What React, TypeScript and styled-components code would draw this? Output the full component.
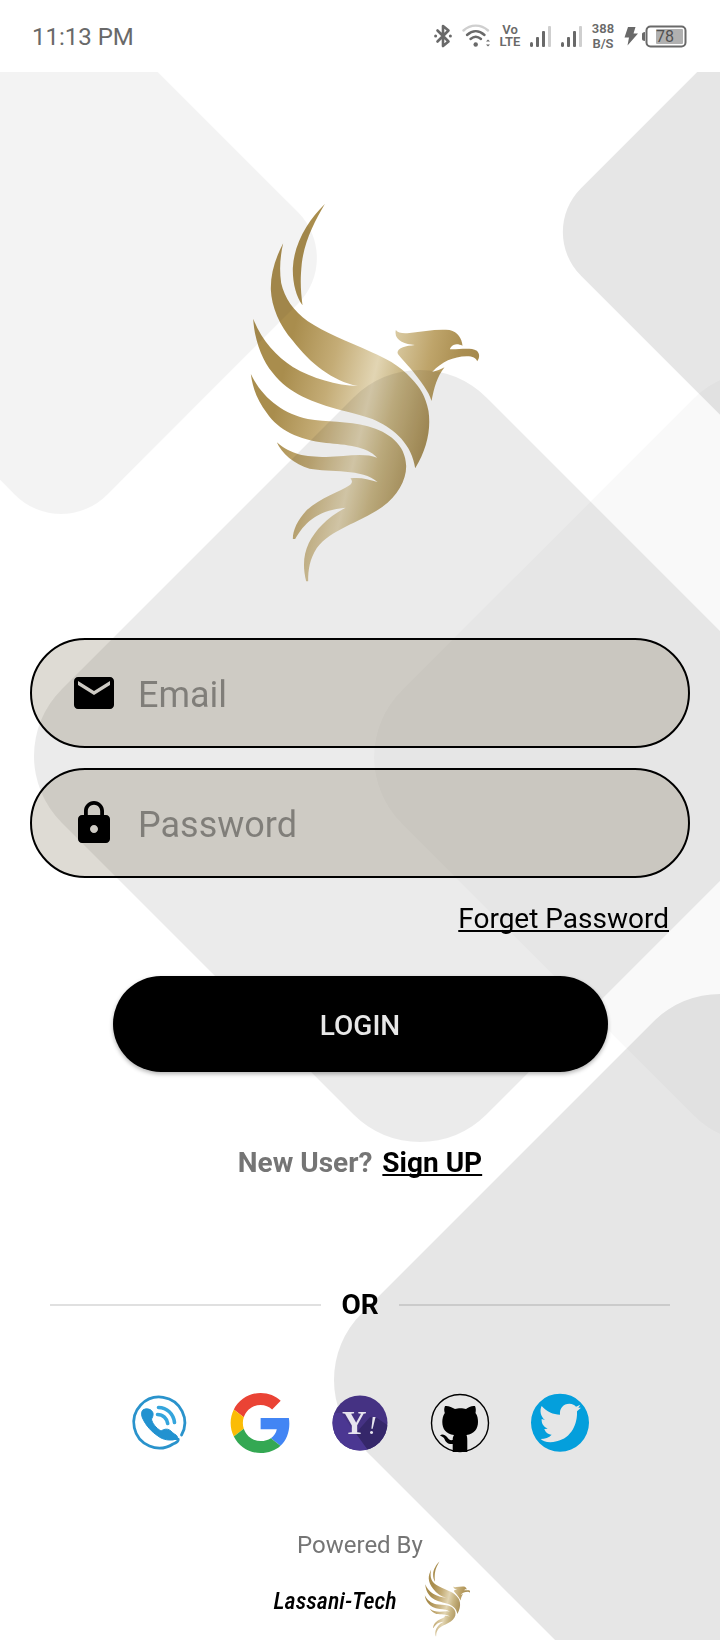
import React, { useId } from "react";
import styled, { createGlobalStyle } from "styled-components";
import { MdEmail, MdLock } from "react-icons/md";

const GlobalStyle = createGlobalStyle`
  *, *::before, *::after { box-sizing: border-box; }
  body {
    margin: 0;
    background: #fff;
    font-family: Roboto, "Liberation Sans", sans-serif;
    color: #000;
  }
`;

const Page = styled.div`
  min-height: 100vh;
  display: flex;
  flex-direction: column;
  background: #fff;
`;

/* ---------- status bar ---------- */

const StatusBar = styled.header`
  height: 72px;
  padding: 0 33px 0 32px;
  display: flex;
  align-items: center;
  justify-content: space-between;
  color: #696969;
`;

const Clock = styled.time`
  padding-top: 2px;
  font-size: 24px;
  line-height: 28px;
`;

const StatusIcons = styled.div`
  display: flex;
  align-items: center;
  gap: 10px;
`;

const StackedLabel = styled.span<{ $line: number; $width: number }>`
  display: flex;
  flex-direction: column;
  align-items: center;
  width: ${(p) => p.$width}px;
  font-size: 13px;
  font-weight: 600;
  line-height: ${(p) => p.$line}px;
`;

const Power = styled.div`
  display: flex;
  align-items: center;
  gap: 4px;
`;

const Bluetooth = () => (
  <svg width="18" height="24" viewBox="0 0 18 24" fill="none" stroke="#696969" strokeWidth="2.6" aria-hidden="true">
    <path d="M3.5 6.5L14.5 17.5L9 22V2L14.5 6.5L3.5 17.5" strokeLinejoin="round" strokeLinecap="round" />
    <circle cx="1.6" cy="12" r="1.5" fill="#696969" stroke="none" />
    <circle cx="16.4" cy="12" r="1.5" fill="#696969" stroke="none" />
  </svg>
);

const Wifi = () => (
  <svg width="28" height="24" viewBox="0 0 28 24" fill="none" strokeWidth="2.4" strokeLinecap="round" aria-hidden="true">
    <path d="M1.5 6.5C8.5 0 19 0 26 6.5" stroke="#cfcfcf" />
    <path d="M5 11C10.500 6 17 6 22.500 11" stroke="#696969" />
    <path d="M8.500 15C12 12 15.500 12 19 15" stroke="#696969" />
    <circle cx="13.700" cy="20.500" r="2.200" fill="#696969" />
    <path d="M24 17.500L26 15.500L28 17.500ZM24 20.500L26 22.500L28 20.500Z" fill="#696969" />
  </svg>
);

const Signal = () => (
  <svg width="21" height="24" viewBox="0 0 21 24" aria-hidden="true">
    <rect x="0" y="18" width="3" height="5" rx="1.5" fill="#696969" />
    <rect x="6" y="13" width="3" height="10" rx="1" fill="#696969" />
    <rect x="12" y="7" width="3" height="16" rx="1" fill="#696969" />
    <rect x="18" y="2" width="3" height="21" rx="1" fill="#cfcfcf" />
  </svg>
);

const Bolt = () => (
  <svg width="14" height="20" viewBox="0 0 14 20" aria-hidden="true">
    <path d="M4 1H11.500L9.500 7.500H14L3.500 19.500L5 11.500H.5Z" fill="#696969" />
  </svg>
);

const Battery = () => (
  <svg width="45" height="24" viewBox="0 0 45 24" role="img" aria-label="Battery 78%">
    <path d="M3 8V17C1 17 0 16 0 15V10C0 9 1 8 3 8Z" fill="#696969" />
    <rect x="4.500" y="2.500" width="39" height="20" rx="4" fill="#fff" stroke="#696969" strokeWidth="2" />
    <rect x="14" y="5" width="27" height="15" rx="1" fill="#b0b0b0" />
    <text x="23" y="18" textAnchor="middle" fontSize="16" fill="#505050">78</text>
  </svg>
);

/* ---------- backdrop ---------- */

const Screen = styled.main`
  position: relative;
  isolation: isolate;
  flex: 1;
  display: flex;
  flex-direction: column;
  align-items: center;
  padding: 129px 30px 3px;
  overflow: hidden;
`;

const BackdropArt = styled.svg`
  position: absolute;
  inset: 0;
  width: 100%;
  height: 100%;
  z-index: -1;
`;

const tiles = [
  { cx: 61, cy: 258, size: 400, r: 65, alpha: 0.048 },
  { cx: 820, cy: 232, size: 400, r: 62, alpha: 0.098 },
  { cx: 420, cy: 756, size: 601, r: 94, alpha: 0.077 },
  { cx: 760, cy: 757, size: 601, r: 94, alpha: 0.025 },
  { cx: 720, cy: 1380, size: 601, r: 94, alpha: 0.098 },
];

const Backdrop = () => (
  <BackdropArt viewBox="0 72 720 1568" preserveAspectRatio="xMidYMin slice" aria-hidden="true">
    {tiles.map((t) => (
      <rect
        key={`${t.cx}-${t.cy}`}
        x={t.cx - t.size / 2}
        y={t.cy - t.size / 2}
        width={t.size}
        height={t.size}
        rx={t.r}
        fillOpacity={t.alpha}
        transform={`rotate(45 ${t.cx} ${t.cy})`}
      />
    ))}
  </BackdropArt>
);

/* ---------- logo ---------- */

const LogoArt = styled.svg`
  display: block;
  flex: none;
  mix-blend-mode: multiply;
`;

const PhoenixLogo = ({ width, height }: { width: number; height: number }) => {
  const id = useId();
  const body = `${id}-body`;
  const head = `${id}-head`;
  return (
    <LogoArt width={width} height={height} viewBox="23 34 740 1152" role="img" aria-label="Lassani-Tech logo">
      <defs>
        <linearGradient id={body} gradientUnits="userSpaceOnUse" x1="190" y1="430" x2="638" y2="537">
          <stop offset="0" stopColor="#a98d4d" />
          <stop offset="0.3" stopColor="#c4ac76" />
          <stop offset="0.58" stopColor="#e2d5b3" />
          <stop offset="0.75" stopColor="#c9b684" />
          <stop offset="1" stopColor="#ab925a" />
        </linearGradient>
        <linearGradient id={head} gradientUnits="userSpaceOnUse" x1="500" y1="450" x2="740" y2="500">
          <stop offset="0" stopColor="#d8c89f" />
          <stop offset="0.45" stopColor="#bea46a" />
          <stop offset="0.8" stopColor="#ab8f52" />
          <stop offset="1" stopColor="#a68a4d" />
        </linearGradient>
      </defs>
      <g fill={`url(#${body})`}>
        <path d="M286 43C238 90 193 160 190 235C189 280 200 320 219 347C213 300 212 270 217 220C225 155 255 95 286 43Z" />
        <path d="M161 161C135 210 123 255 124 300C126 350 150 408 190 453C243 522 308 573 385 589C320 587 250 567 190 532C140 500 95 450 71 387C75 450 96 510 130 550C178 612 250 638 335 662C378 673 410 680 440 693C495 718 548 765 557 836C592 778 605 720 597 664C588 620 572 594 545 566C510 525 460 502 430 489C350 454 285 428 235 395C192 364 165 325 155 280C149 240 152 200 161 161Z" />
        <path d="M64 553C70 600 86 635 112 670C148 722 205 750 290 760C350 765 412 770 443 804C405 788 345 800 290 802C225 802 185 795 142 758C155 790 195 825 240 837C300 848 400 836 444 877C415 868 392 862 363 866C370 874 368 882 360 887C330 908 270 925 230 963C205 990 190 1020 190 1048H197C225 1000 262 962 348 954C290 985 258 1022 238 1060C222 1095 219 1130 230 1175H236C236 1140 240 1110 262 1075C305 1018 390 1000 458 952C505 918 531 870 530 828C528 765 478 727 415 710C355 693 290 698 235 688C160 672 98 625 64 553Z" />
      </g>
      <path
        fill={`url(#${head})`}
        d="M499 421C505 430 520 432 540 430C580 426 620 417 660 421C686 427 697 447 699 468C690 464 680 462 672 466C665 470 662 475 661 479C690 480 722 473 742 483C752 492 750 506 743 515C739 505 730 500 712 500C670 501 638 516 608 547C622 544 633 540 645 533C622 562 614 595 606 634C598 605 573 575 550 545C530 520 508 500 504 490C504 473 530 469 556 466C525 463 492 452 499 421Z"
      />
    </LogoArt>
  );
};

/* ---------- login form ---------- */

const LoginForm = styled.form`
  width: 100%;
  display: flex;
  flex-direction: column;
  align-items: center;
  margin-top: 53px;
`;

const Fields = styled.div`
  width: 100%;
  display: flex;
  flex-direction: column;
  gap: 20px;
`;

const Field = styled.label`
  display: flex;
  align-items: center;
  gap: 20px;
  height: 110px;
  padding: 0 38px;
  border: 2px solid #000;
  border-radius: 55px;
  background: rgba(88, 75, 38, 0.2);

  svg {
    flex: none;
  }
`;

const FieldInput = styled.input`
  flex: 1;
  min-width: 0;
  height: 72px;
  padding: 4px 0 0;
  border: 0;
  outline: 0;
  background: transparent;
  font: 36px/44px Roboto, "Liberation Sans", sans-serif;
  color: #000;

  &::placeholder {
    color: rgba(0, 0, 0, 0.38);
    opacity: 1;
  }
`;

const TextLink = styled.a`
  color: #000;
  text-decoration: underline;
  text-decoration-thickness: 2px;
  text-underline-offset: 2px;
  text-decoration-skip-ink: none;
`;

const ForgetLink = styled(TextLink)`
  align-self: flex-end;
  margin: 25px 21px 0 0;
  font-size: 28px;
  line-height: 32px;
`;

const LoginButton = styled.button`
  width: 75%;
  height: 96px;
  margin-top: 41px;
  padding: 4px 0 0;
  border: 0;
  border-radius: 48px;
  background: #000;
  color: #e8e8e8;
  font: 500 28px/32px Roboto, "Liberation Sans", sans-serif;
  box-shadow: 0 2px 4px rgba(0, 0, 0, 0.3);
  cursor: pointer;
`;

const SignUpLine = styled.p`
  display: flex;
  gap: 10px;
  margin: 75px 0 0;
  font-size: 28px;
  font-weight: 700;
  line-height: 32px;
  color: #757575;
`;

const Divider = styled.div`
  align-self: stretch;
  display: flex;
  align-items: center;
  gap: 20px;
  margin: 110px 20px 0;
  font-size: 28px;
  font-weight: 700;
  line-height: 32px;

  &::before,
  &::after {
    content: "";
    flex: 1;
    height: 2px;
    background: rgba(0, 0, 0, 0.12);
  }
`;

/* ---------- social sign-in ---------- */

const SocialRow = styled.div`
  display: flex;
  gap: 40px;
  margin-top: 72px;
`;

const SocialButton = styled.button`
  width: 60px;
  height: 60px;
  padding: 0;
  border: 0;
  background: transparent;
  cursor: pointer;

  svg {
    display: block;
  }
`;

const PhoneIcon = () => (
  <svg width="60" height="60" viewBox="0 0 60 60" fill="none" strokeLinecap="round">
    <path d="M51.500 42A25.500 25.500 0 1 0 43 51C46 50 49 48 48 46C46 44.500 43 47 38 45" stroke="#2a93cc" strokeWidth="2.800" />
    <path
      d="M13 17C16 14.500 22 16 23 20C23.500 23 22 25 21.500 26C22 30 26 35 31 38C34 36 37 35.500 39.500 37C42 38.500 43 40.500 46 42C48 43.500 48 46 46 46C40 48 33 47 28 43C22 39 16 33 12.500 25C11 21.500 11 19 13 17Z"
      fill="#2292d0"
      stroke="#2292d0"
    />
    <path d="M28.500 14.500C37 14.500 43.500 21 44.500 29.500" stroke="#35a5dc" strokeWidth="3.600" />
    <path d="M27.500 21.500C33 21.500 37 25.500 37.700 30.500" stroke="#35a5dc" strokeWidth="3.600" />
  </svg>
);

const GoogleIcon = () => (
  <svg width="60" height="60" viewBox="-.5 0 48 48">
    <path fill="#EA4335" d="M24 9.500c3.540 0 6.710 1.220 9.210 3.600l6.850-6.850C35.900 2.380 30.470 0 24 0 14.620 0 6.510 5.380 2.560 13.220l7.980 6.190C12.430 13.720 17.740 9.500 24 9.500z" />
    <path fill="#4285F4" d="M46.980 24.550c0-1.570-.15-3.090-.38-4.550H24v9.020h12.940c-.58 2.960-2.260 5.480-4.780 7.180l7.730 6c4.510-4.180 7.090-10.360 7.090-17.650z" />
    <path fill="#FBBC05" d="M10.530 28.590c-.48-1.450-.76-2.990-.76-4.590s.27-3.140.76-4.590l-7.980-6.190C.92 16.460 0 20.120 0 24c0 3.880.92 7.540 2.560 10.780l7.970-6.190z" />
    <path fill="#34A853" d="M24 48c6.480 0 11.930-2.130 15.890-5.810l-7.730-6c-2.150 1.450-4.920 2.300-8.160 2.300-6.260 0-11.570-4.220-13.470-9.910l-7.980 6.190C6.510 42.620 14.620 48 24 48z" />
  </svg>
);

const YahooIcon = () => (
  <svg width="60" height="60" viewBox="0 0 60 60" fontFamily="Liberation Serif, serif" fill="#e6e4ee">
    <defs>
      <clipPath id="yahoo-disc">
        <circle cx="30" cy="30" r="27.500" />
      </clipPath>
    </defs>
    <g clipPath="url(#yahoo-disc)">
      <rect width="60" height="60" fill="#453283" />
      <path d="M0 20H11L42 60H0Z" fill="#4b3792" />
      <path d="M14 24L40 60H60V34L47 25L40 24L26 40Z" fill="#35276a" />
    </g>
    <text x="12" y="41" fontSize="34" fontWeight="700">Y</text>
    <text x="38" y="41" fontSize="26" fontStyle="italic">!</text>
  </svg>
);

const GithubIcon = () => (
  <svg width="60" height="60" viewBox="0 0 60 60">
    <circle cx="30" cy="30" r="28.500" fill="none" stroke="#000" strokeWidth="1.400" />
    <path d="M15 13C18 12.500 22 14 25 16C28 15 33 15 36 16C38 14 42 12.500 45 13C46 15 46 18 45.500 20C47.500 22.500 48 26 48 29C48 36 44 41 36.500 42C37.300 44 37.300 46 37.300 48V59H22.700V51C18 51.500 15.500 49 14.500 46C13.500 44 12 43.500 10 42.500C12 40.500 15 41.500 17 44C18.500 46.500 20 47.500 22.700 47C22.700 45 23 43.500 24 42C16 41 12.300 36 12.300 29C12.300 26 13 22.500 14.800 20C14 18 14 15 15 13Z" />
  </svg>
);

const TwitterIcon = () => (
  <svg width="60" height="60" viewBox="390 69 180 180">
    <path
      fill="#049fdc"
      fillRule="evenodd"
      d="M393 158A87 87 0 1 0 567 158A87 87 0 1 0 393 158ZM425 108C440 125 460 134 480 134C478 115 490 101 508 101C518 101 524 105 528 110L541 104L535 113L543 113L531 124C533 160 515 205 470 214C445 220 430 214 422 207C435 207 447 203 455 194C442 193 436 185 433 177L443 176C430 170 424 160 425 147L435 150C422 140 418 122 425 108Z"
    />
  </svg>
);

const socials = [
  { name: "Phone", Icon: PhoneIcon },
  { name: "Google", Icon: GoogleIcon },
  { name: "Yahoo", Icon: YahooIcon },
  { name: "GitHub", Icon: GithubIcon },
  { name: "Twitter", Icon: TwitterIcon },
];

/* ---------- footer ---------- */

const Footer = styled.footer`
  display: flex;
  flex-direction: column;
  align-items: center;
  gap: 2px;
  margin-top: 78px;
  font-size: 24px;
  line-height: 28px;
`;

const PoweredBy = styled.span`
  color: #757575;
`;

const Brand = styled.div`
  display: flex;
  align-items: center;
  gap: 25px;
  padding-left: 24px;
`;

const BrandName = styled.span`
  padding-top: 4px;
  font-family: "Roboto Condensed", Roboto, "Liberation Sans", sans-serif;
  font-style: italic;
  font-weight: 500;
`;

export default function App() {
  return (
    <Page>
      <GlobalStyle />
      <StatusBar>
        <Clock>11:13 PM</Clock>
        <StatusIcons>
          <Bluetooth />
          <Wifi />
          <StackedLabel $line={12} $width={20}>
            <span>Vo</span>
            <span>LTE</span>
          </StackedLabel>
          <Signal />
          <Signal />
          <StackedLabel $line={15} $width={22}>
            <span>388</span>
            <span>B/S</span>
          </StackedLabel>
          <Power>
            <Bolt />
            <Battery />
          </Power>
        </StatusIcons>
      </StatusBar>
      <Screen>
        <Backdrop />
        <PhoenixLogo width={247} height={384} />
        <LoginForm onSubmit={(e) => e.preventDefault()}>
          <Fields>
            <Field>
              <MdEmail size={48} aria-hidden="true" />
              <FieldInput type="email" placeholder="Email" aria-label="Email" />
            </Field>
            <Field>
              <MdLock size={48} aria-hidden="true" />
              <FieldInput type="password" placeholder="Password" aria-label="Password" />
            </Field>
          </Fields>
          <ForgetLink href="#forget">Forget Password</ForgetLink>
          <LoginButton type="submit">LOGIN</LoginButton>
        </LoginForm>
        <SignUpLine>
          <span>New User?</span>
          <TextLink href="#signup">Sign UP</TextLink>
        </SignUpLine>
        <Divider>OR</Divider>
        <SocialRow>
          {socials.map(({ name, Icon }) => (
            <SocialButton key={name} type="button" aria-label={`Continue with ${name}`}>
              <Icon />
            </SocialButton>
          ))}
        </SocialRow>
        <Footer>
          <PoweredBy>Powered By</PoweredBy>
          <Brand>
            <BrandName>Lassani-Tech</BrandName>
            <PhoenixLogo width={49} height={76} />
          </Brand>
        </Footer>
      </Screen>
    </Page>
  );
}
